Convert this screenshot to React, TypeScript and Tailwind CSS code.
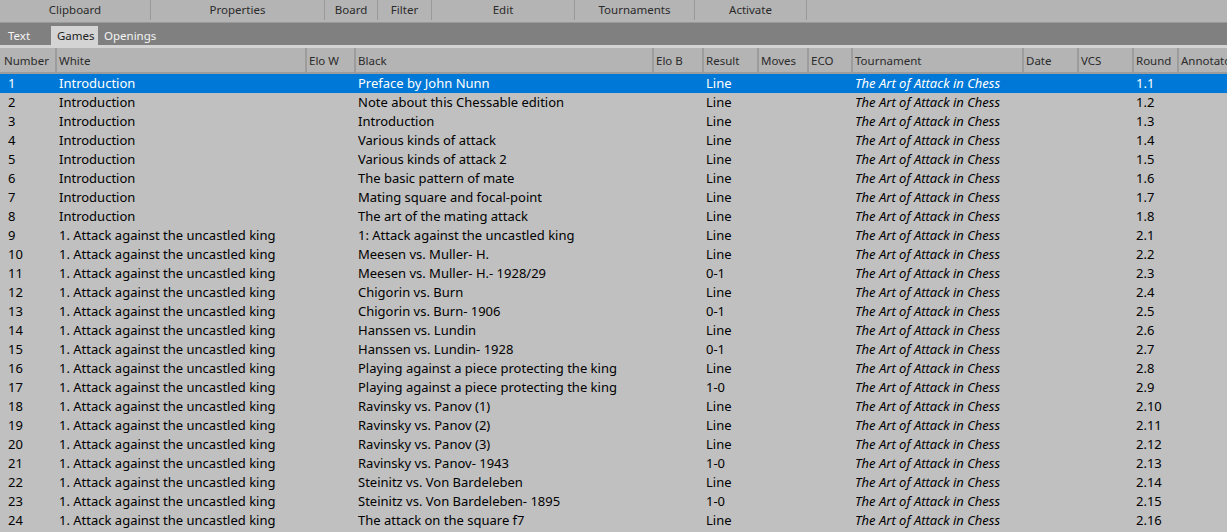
const groups = [
  { label: "Clipboard", w: 151 },
  { label: "Properties", w: 174 },
  { label: "Board", w: 53 },
  { label: "Filter", w: 54 },
  { label: "Edit", w: 143 },
  { label: "Tournaments", w: 120 },
  { label: "Activate", w: 112 },
];

// widths measured from left edge to left edge of each header cell
const cols = [
  { label: "Number", w: 55 },
  { label: "White", w: 250 },
  { label: "Elo W", w: 49 },
  { label: "Black", w: 298 },
  { label: "Elo B", w: 50 },
  { label: "Result", w: 55 },
  { label: "Moves", w: 50 },
  { label: "ECO", w: 44 },
  { label: "Tournament", w: 171 },
  { label: "Date", w: 55 },
  { label: "VCS", w: 55 },
  { label: "Round", w: 45 },
  { label: "Annotator", w: 60 },
];

const A = "1. Attack against the uncastled king";
const rows: [string, string, string, string][] = [
  ["Introduction", "Preface by John Nunn", "Line", "1.1"],
  ["Introduction", "Note about this Chessable edition", "Line", "1.2"],
  ["Introduction", "Introduction", "Line", "1.3"],
  ["Introduction", "Various kinds of attack", "Line", "1.4"],
  ["Introduction", "Various kinds of attack 2", "Line", "1.5"],
  ["Introduction", "The basic pattern of mate", "Line", "1.6"],
  ["Introduction", "Mating square and focal-point", "Line", "1.7"],
  ["Introduction", "The art of the mating attack", "Line", "1.8"],
  [A, "1: Attack against the uncastled king", "Line", "2.1"],
  [A, "Meesen vs. Muller- H.", "Line", "2.2"],
  [A, "Meesen vs. Muller- H.- 1928/29", "0-1", "2.3"],
  [A, "Chigorin vs. Burn", "Line", "2.4"],
  [A, "Chigorin vs. Burn- 1906", "0-1", "2.5"],
  [A, "Hanssen vs. Lundin", "Line", "2.6"],
  [A, "Hanssen vs. Lundin- 1928", "0-1", "2.7"],
  [A, "Playing against a piece protecting the king", "Line", "2.8"],
  [A, "Playing against a piece protecting the king", "1-0", "2.9"],
  [A, "Ravinsky vs. Panov (1)", "Line", "2.10"],
  [A, "Ravinsky vs. Panov (2)", "Line", "2.11"],
  [A, "Ravinsky vs. Panov (3)", "Line", "2.12"],
  [A, "Ravinsky vs. Panov- 1943", "1-0", "2.13"],
  [A, "Steinitz vs. Von Bardeleben", "Line", "2.14"],
  [A, "Steinitz vs. Von Bardeleben- 1895", "1-0", "2.15"],
  [A, "The attack on the square f7", "Line", "2.16"],
];

export default function App() {
  return (
    <div className="w-[1227px] h-[532px] overflow-hidden bg-[#c0c0c0] text-[13px] font-['Noto_Sans',sans-serif] text-black">
      {/* ribbon group labels */}
      <div className="flex h-[23px] bg-[#b4b4b4] border-b border-[#9a9a9a] text-[11.5px]">
        {groups.map((g) => (
          <div key={g.label} style={{ width: g.w }} className="shrink-0 h-[20px] flex items-center justify-center border-r border-[#999] text-[#2b2b2b]">
            {g.label}
          </div>
        ))}
      </div>

      {/* tabs */}
      <div className="flex items-end h-[22px] bg-[#808080] text-[11.5px]">
        <div className="w-[51px] pl-[8px] h-[19px] flex items-center pt-[1px] text-[#f4f4f4]">Text</div>
        <div className="w-[47px] pl-[6px] h-[19px] flex items-center pt-[1px] bg-[#d4d4d4] text-[#222]">Games</div>
        <div className="pl-[6px] h-[19px] flex items-center pt-[1px] text-[#f4f4f4]">Openings</div>
      </div>
      <div className="h-[3px] bg-[#d4d4d4]" />

      {/* header */}
      <div className="flex h-[26px] bg-[#b4b4b4] border-b-2 border-[#9c9c9c] text-[11.5px]">
        {cols.map((c, i) => (
          <div key={c.label} style={{ width: c.w }} className={`shrink-0 flex items-center pt-[1px] text-[#2b2b2b] whitespace-nowrap overflow-hidden ${i > 0 ? "border-l-2 border-[#9c9c9c] pl-[2px]" : "pl-[4px]"}`}>
            {c.label}
          </div>
        ))}
      </div>

      {/* rows */}
      <div className="flex flex-col">
        {rows.map((r, i) => {
          const sel = i === 0;
          return (
            <div key={i} className={`flex h-[19px] items-center whitespace-nowrap ${sel ? "bg-[#0078d7] text-white" : ""}`}>
              <div className="w-[55px] shrink-0 pl-[8px]">{i + 1}</div>
              <div className="w-[299px] shrink-0 pl-[4px] font-[450]">{r[0]}</div>
              <div className="w-[348px] shrink-0 pl-[4px]">{r[1]}</div>
              <div className="w-[149px] shrink-0 pl-[4px]">{r[2]}</div>
              <div className="w-[281px] shrink-0 pl-[4px] italic">The Art of Attack in Chess</div>
              <div className="shrink-0 pl-[4px]">{r[3]}</div>
            </div>
          );
        })}
      </div>
    </div>
  );
}
